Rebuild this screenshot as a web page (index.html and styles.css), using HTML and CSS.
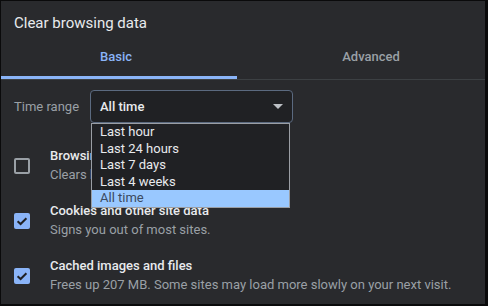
FILE: index.html
```html
<!DOCTYPE html>
<html>
<head>
<meta charset="utf-8">
<link rel="stylesheet" href="styles.css">
</head>
<body>
<div class="frame">
  <div class="title">Clear browsing data</div>
  <div class="tabs">
    <div class="tab tab-basic active">Basic</div>
    <div class="tab tab-adv">Advanced</div>
  </div>
  <div class="content">
    <div class="range-row">
      <span class="range-label">Time range</span>
      <div class="select">
        <span class="select-value">All time</span>
        <svg class="arrow" width="10" height="5" viewBox="0 0 10 5"><path d="M0 0 L10 0 L5 5 Z" fill="#bdc1c6"/></svg>
      </div>
    </div>
    <div class="item">
      <span class="box"></span>
      <div class="text">
        <div class="item-title">Browsing history</div>
        <div class="item-sub">Clears history from all synced devices.</div>
      </div>
    </div>
    <div class="item">
      <span class="box checked"><svg width="16" height="16" viewBox="0 0 16 16"><path d="M3.6 8.2 L6.6 11 L12.4 5.2" fill="none" stroke="#202124" stroke-width="2"/></svg></span>
      <div class="text">
        <div class="item-title">Cookies and other site data</div>
        <div class="item-sub">Signs you out of most sites.</div>
      </div>
    </div>
    <div class="item">
      <span class="box checked"><svg width="16" height="16" viewBox="0 0 16 16"><path d="M3.6 8.2 L6.6 11 L12.4 5.2" fill="none" stroke="#202124" stroke-width="2"/></svg></span>
      <div class="text">
        <div class="item-title">Cached images and files</div>
        <div class="item-sub">Frees up 207 MB. Some sites may load more slowly on your next visit.</div>
      </div>
    </div>
  </div>
  <ul class="dropdown">
    <li>Last hour</li>
    <li>Last 24 hours</li>
    <li>Last 7 days</li>
    <li>Last 4 weeks</li>
    <li class="selected">All time</li>
  </ul>
</div>
</body>
</html>
```

FILE: styles.css
```css
* { box-sizing: border-box; }
html, body { margin: 0; padding: 0; background: #000; }
body { font-family: Roboto, "Liberation Sans", sans-serif; }
.frame {
  position: relative;
  width: 488px;
  height: 306px;
  background: #292a2d;
  border-style: solid;
  border-color: #0a0a0b;
  border-width: 1px 3px 2px 1px;
  overflow: hidden;
}
.title {
  padding: 12px 0 0 13px;
  height: 32px;
  font-size: 15px;
  line-height: 20px;
  color: #e8eaed;
}
.tabs {
  display: flex;
  border-bottom: 1px solid #3c4043;
}
.tab {
  height: 46px;
  padding-top: 16px;
  font-size: 13px;
  line-height: 16px;
  font-weight: 500;
  text-align: center;
  color: #9aa0a6;
  border-bottom: 3px solid transparent;
}
.tab-basic { width: 236px; padding-right: 6px; }
.tab-adv { flex: 1; padding-left: 20px; }
.tab.active { color: #8ab4f8; border-bottom-color: #8ab4f8; }
.content { padding-top: 10px; }
.range-row {
  display: flex;
  align-items: center;
  padding-left: 13px;
  height: 33px;
}
.range-label {
  width: 76px;
  font-size: 13px;
  color: #9aa0a6;
}
.select {
  width: 203px;
  height: 33px;
  display: flex;
  align-items: center;
  justify-content: space-between;
  padding: 0 9px 0 9px;
  background: #202124;
  border: 1px solid #5b6a80;
  border-radius: 4px;
}
.select-value { font-size: 13px; font-weight: 500; color: #e8eaed; }
.arrow { display: block; }
.item {
  display: flex;
  align-items: center;
  height: 55px;
  padding-left: 13px;
}
.range-row + .item { margin-top: 15px; }
.box {
  width: 16px;
  height: 16px;
  flex: none;
  border: 2px solid #9aa0a6;
  border-radius: 2px;
  margin-right: 20px;
}
.box.checked { border: none; background: #8ab4f8; }
.box svg { display: block; }
.item-title { font-size: 13px; line-height: 18px; font-weight: 500; color: #e8eaed; white-space: nowrap; }
.item-sub { font-size: 13px; line-height: 20px; color: #9aa0a6; white-space: nowrap; }
.dropdown {
  position: absolute;
  left: 90px;
  top: 122px;
  width: 199px;
  margin: 0;
  padding: 0;
  list-style: none;
  background: #202124;
  border: 1px solid #9a9ea4;
}
.dropdown li {
  height: 16.6px;
  line-height: 16.6px;
  padding-left: 8px;
  font-size: 13px;
  color: #e8eaed;
}
.dropdown li.selected { background: #99c8ff; color: #3c4a60; }
```
